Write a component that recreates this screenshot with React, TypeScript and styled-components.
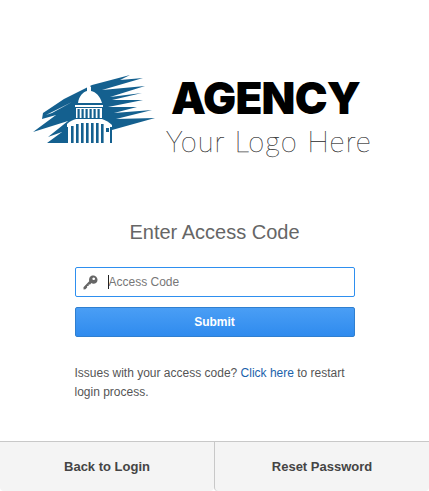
import styled, { createGlobalStyle } from "styled-components";

const GlobalStyle = createGlobalStyle`
	* {
		box-sizing: border-box;
	}

	html,
	body {
		margin: 0;
		padding: 0;
		background: #fff;
	}

	body {
		font-family: "Liberation Sans", Arial, sans-serif;
	}
`;

const drumColumns = [45.5, 49.5, 53.5, 57.5, 61.5, 65.5];
const lowerColumns = [
	{ x: 39, y: 54 },
	{ x: 44, y: 52 },
	{ x: 49, y: 51 },
	{ x: 54, y: 51 },
	{ x: 59, y: 51 },
	{ x: 64, y: 51 },
	{ x: 69, y: 52 },
];

function CapitolLogo() {
	return (
		<LogoMark viewBox="0 0 125 76" aria-hidden="true">
			<path
				fill="#14608f"
				d="M1 60 L24 43 L10 47 L11 41 L32 27 L44 21 L24 31 L60 13 L98 3 L88 8 L111 6 L70 18 L113 14 L78 25 L110 21 L80 28 L111 28 L76 35 L105 35 L82 41 L120 38 L84 47 L123 46 L80 58 L80 71 L15 71 L30 60 L16 65 L36 49 Z"
			/>
			<g fill="#fff">
				<path d="M14 43 L40 30 L20 41 Z" />
				<path d="M46 31 C47 24 51 20 55 19 L55 15 L57 13 L59 15 L59 19 C64 20 68 24 70 31 Z" />
				<path d="M43 33 H71 V35 H43 Z" />
				<path d="M44 36 H70 V46 H44 Z" />
				<path d="M35 52 C38 49 41 48 44 47 H70 C73 48 77 50 80 53 L80 55 L35 55 Z" />
				<path d="M36 55 H78 V71 H36 Z" />
			</g>
			<g fill="#14608f">
				{drumColumns.map((x) => (
					<rect key={x} x={x} y="37" width="2.2" height="9" />
				))}
				{lowerColumns.map((col) => (
					<rect key={col.x} x={col.x} y={col.y} width="2.6" height={71 - col.y} />
				))}
				<rect x="74" y="56" width="3" height="4" />
			</g>
		</LogoMark>
	);
}

function KeyIcon() {
	return (
		<KeyGlyph viewBox="0 0 16 16" aria-hidden="true">
			<path
				fill="#666"
				fillRule="evenodd"
				d="M10.5 0.5 C13.3 0.5 15.5 2.7 15.5 5 C15.5 7.7 13.2 9.6 10.6 9.3 L9 8.6 L7.6 10 L6 10 L6 11.6 L4.4 11.6 L4.4 13.2 L2.6 15.2 L0.6 15.5 L0.5 13 L6.6 6.6 C6 3 7.8 0.5 10.5 0.5 Z M11.4 2.6 A1.4 1.4 0 1 0 11.41 2.6 Z"
			/>
		</KeyGlyph>
	);
}

export default function App() {
	return (
		<>
			<GlobalStyle />
			<Page>
				<Main>
					<Brand>
						<CapitolLogo />
						<BrandText>
							<AgencyName>AGENCY</AgencyName>
							<Tagline>Your Logo Here</Tagline>
						</BrandText>
					</Brand>
					<Title>Enter Access Code</Title>
					<Form onSubmit={(e) => e.preventDefault()}>
						<InputWrap>
							<KeyIcon />
							<Caret />
							<CodeInput type="text" placeholder="Access Code" />
						</InputWrap>
						<SubmitButton type="submit">Submit</SubmitButton>
					</Form>
					<HelpText>
						Issues with your access code? <HelpLink href="#">Click here</HelpLink> to restart
						login process.
					</HelpText>
				</Main>
				<Footer>
					<FooterButton type="button">Back to Login</FooterButton>
					<FooterButton type="button" $divided>
						Reset Password
					</FooterButton>
				</Footer>
			</Page>
		</>
	);
}

const Page = styled.div`
	display: flex;
	flex-direction: column;
	width: 429px;
	height: 491px;
	overflow: hidden;
	background: #fff;
`;

const Main = styled.main`
	flex: 1;
	display: flex;
	flex-direction: column;
	align-items: center;
	padding-top: 72px;
`;

const Brand = styled.div`
	display: flex;
	align-items: flex-start;
	align-self: flex-start;
	margin-left: 32px;
	gap: 9px;
	height: 93px;
`;

const LogoMark = styled.svg`
	display: block;
	width: 125px;
	height: 76px;
`;

const BrandText = styled.div`
	display: flex;
	flex-direction: column;
	margin-top: 1px;
`;

const AgencyName = styled.div`
	font-family: "Inter", sans-serif;
	font-size: 44px;
	font-weight: 900;
	line-height: 50px;
	letter-spacing: -0.8px;
	margin-left: 5px;
	color: #000;
`;

const Tagline = styled.div`
	font-family: "Lato", sans-serif;
	font-size: 29px;
	font-weight: 100;
	line-height: 36px;
	letter-spacing: 1.1px;
	color: #000;
	-webkit-text-stroke: 0.25px #333;
`;

const Title = styled.h1`
	margin: 55px 0 0;
	font-size: 20px;
	font-weight: 400;
	line-height: 24px;
	color: #666;
`;

const Form = styled.form`
	display: flex;
	flex-direction: column;
	gap: 10px;
	width: 280px;
	margin-top: 23px;
`;

const InputWrap = styled.div`
	position: relative;
	display: flex;
	align-items: center;
	height: 30px;
	padding-left: 7px;
	border: 1px solid #2e8fef;
	border-radius: 2px;
	background: #fff;
`;

const KeyGlyph = styled.svg`
	flex: none;
	width: 15px;
	height: 15px;
`;

const Caret = styled.span`
	position: absolute;
	left: 32px;
	top: 7px;
	width: 1px;
	height: 14px;
	background: #222;
`;

const CodeInput = styled.input`
	flex: 1;
	min-width: 0;
	height: 100%;
	margin-left: 11px;
	padding: 0;
	border: 0;
	outline: 0;
	background: transparent;
	font-family: inherit;
	font-size: 12px;
	color: #333;

	&::placeholder {
		color: #777;
		opacity: 1;
	}
`;

const SubmitButton = styled.button`
	height: 30px;
	padding: 0;
	border: 1px solid #2f7fd0;
	border-radius: 2px;
	background: linear-gradient(#4a9ef5, #2f8bee);
	font-family: inherit;
	font-size: 12px;
	font-weight: 700;
	color: #fff;
	cursor: pointer;
`;

const HelpText = styled.p`
	width: 280px;
	margin: 27px 0 0;
	font-size: 12px;
	line-height: 19px;
	color: #555;
`;

const HelpLink = styled.a`
	color: #1b62ab;
	text-decoration: none;
`;

const Footer = styled.footer`
	display: grid;
	flex: none;
	grid-template-columns: 214px 1fr;
	height: 50px;
	border-top: 1px solid #c8c8c8;
`;

const FooterButton = styled.button<{ $divided?: boolean }>`
	padding: 0;
	border: 0;
	border-left: ${(p) => (p.$divided ? "1px solid #c8c8c8" : "0")};
	border-radius: 0 0 4px 4px;
	background: #f4f4f4;
	font-family: inherit;
	font-size: 13px;
	font-weight: 700;
	color: #444;
	cursor: pointer;
`;
